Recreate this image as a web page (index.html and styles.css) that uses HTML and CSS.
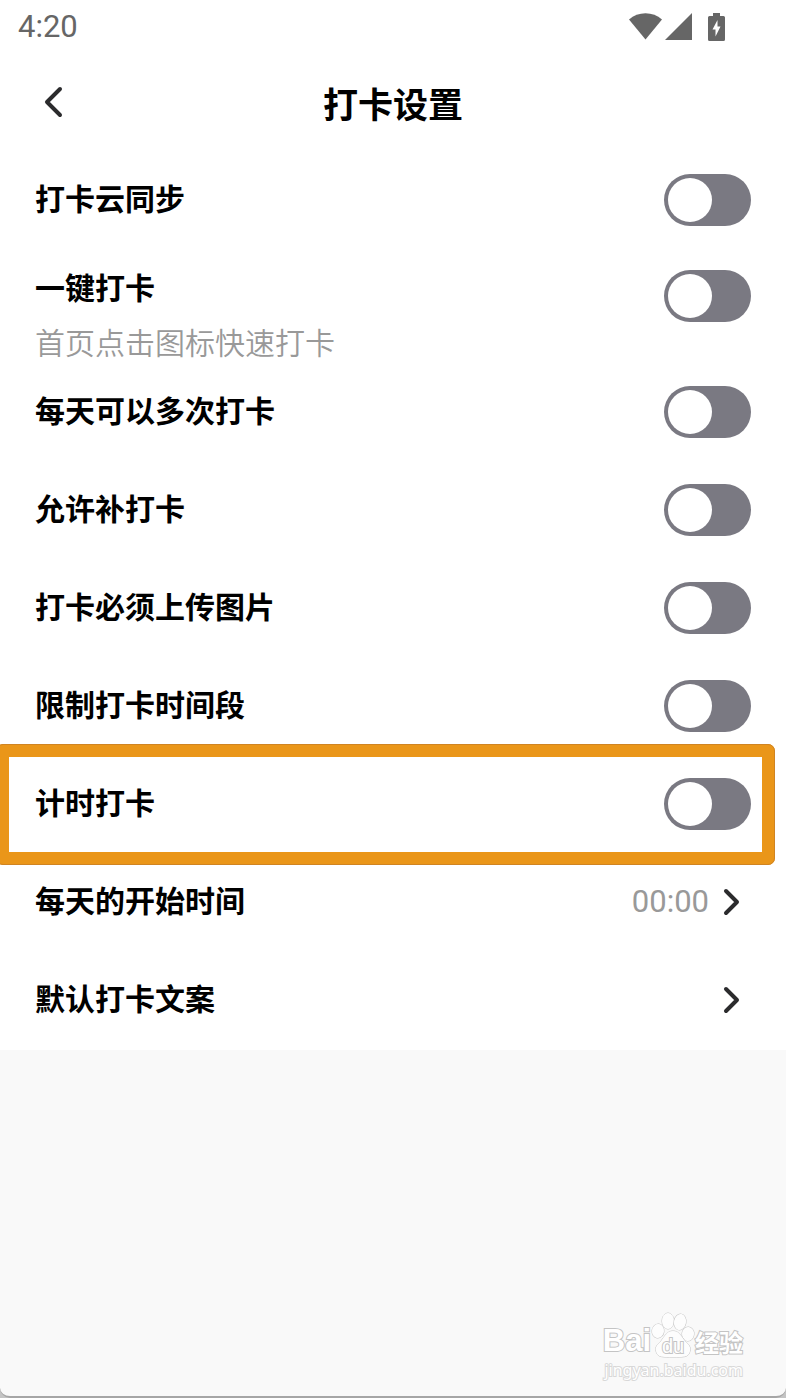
FILE: index.html
```html
<!DOCTYPE html>
<html lang="zh-CN">
<head>
    <meta charset="UTF-8">
    <meta name="viewport" content="width=device-width, initial-scale=1.0">
    <title>打卡设置</title>
    <link rel="stylesheet" href="styles.css">
</head>
<body>

    <div class="screen">
        <!-- Status bar -->
        <div class="status-bar">
            <span class="status-time">4:20</span>
            <div class="status-icons">
                <svg width="33" height="27" viewBox="0 0 33 27" aria-hidden="true">
                    <path d="M0 6.5C9-2 24-2 33 6.5L16.500 26.500Z" fill="#666"/>
                </svg>
                <svg width="27" height="27" viewBox="0 0 27 27" aria-hidden="true">
                    <path d="M27 0V27H0Z" fill="#666"/>
                </svg>
                <svg class="battery" width="17" height="28" viewBox="0 0 17 28" aria-hidden="true">
                    <path d="M5 0h7v3h3.500q1.500 0 1.500 1.500v22q0 1.500-1.500 1.500h-14q-1.500 0-1.500-1.500v-22q0-1.500 1.500-1.500h3.500z" fill="#666"/>
                    <path d="M9.500 7v6.500h3l-5 10v-7h-3z" fill="#fff"/>
                </svg>
            </div>
        </div>

        <header class="header">
            <button class="back-button" type="button" aria-label="返回">
                <svg width="20" height="32" viewBox="0 0 20 32" aria-hidden="true">
                    <path d="M17 3L4 16L17 29" class="chevron"/>
                </svg>
            </button>
            <h1>打卡设置</h1>
        </header>

        <main class="settings">
            <div class="row">
                <label for="cloudSync">打卡云同步</label>
                <input type="checkbox" class="toggle" id="cloudSync">
            </div>

            <div class="row row-note">
                <div class="row-text">
                    <label for="oneKey">一键打卡</label>
                    <p class="note">首页点击图标快速打卡</p>
                </div>
                <input type="checkbox" class="toggle" id="oneKey">
            </div>

            <div class="row">
                <label for="multiple">每天可以多次打卡</label>
                <input type="checkbox" class="toggle" id="multiple">
            </div>

            <div class="row">
                <label for="makeUp">允许补打卡</label>
                <input type="checkbox" class="toggle" id="makeUp">
            </div>

            <div class="row">
                <label for="picture">打卡必须上传图片</label>
                <input type="checkbox" class="toggle" id="picture">
            </div>

            <div class="row">
                <label for="period">限制打卡时间段</label>
                <input type="checkbox" class="toggle" id="period">
            </div>

            <div class="row highlight">
                <label for="timer">计时打卡</label>
                <input type="checkbox" class="toggle" id="timer">
            </div>

            <a class="row" href="#start-time">
                <span>每天的开始时间</span>
                <span class="row-value">00:00
                    <svg width="18" height="28" viewBox="0 0 18 28" aria-hidden="true">
                        <path d="M3 3L14 14L3 25" class="chevron"/>
                    </svg>
                </span>
            </a>

            <a class="row" href="#default-text">
                <span>默认打卡文案</span>
                <span class="row-value">
                    <svg width="18" height="28" viewBox="0 0 18 28" aria-hidden="true">
                        <path d="M3 3L14 14L3 25" class="chevron"/>
                    </svg>
                </span>
            </a>
        </main>

        <!-- Watermark -->
        <div class="watermark">
            <div class="watermark-logo">
                <span class="watermark-bai">Bai</span>
                <svg width="44" height="46" viewBox="0 0 44 46" aria-hidden="true">
                    <g class="paw">
                        <ellipse cx="7" cy="19" rx="6" ry="7" transform="rotate(8 7 19)"/>
                        <ellipse cx="17" cy="9" rx="6" ry="8"/>
                        <ellipse cx="29" cy="10" rx="6" ry="8" transform="rotate(10 29 10)"/>
                        <ellipse cx="37" cy="22" rx="6" ry="7" transform="rotate(4 37 22)"/>
                        <path d="M22 19C28 19 30 24 34 29C38 33 40 35 39 39C38 46 31 45 22 45C13 45 6 46 5 39C4 35 6 33 10 29C14 24 16 19 22 19Z"/>
                    </g>
                    <text x="22" y="41" class="paw-text">du</text>
                </svg>
                <span class="watermark-name">经验</span>
            </div>
            <div class="watermark-url">jingyan.baidu.com</div>
        </div>
    </div>

</body>
</html>
```
FILE: styles.css
```css
* {
    box-sizing: border-box;
}

body {
    margin: 0;
    background-color: #c4c4c4;
    font-family: Roboto, "Noto Sans CJK SC", sans-serif;
    color: #000;
}

.screen {
    position: relative;
    min-height: 100vh;
    background-color: #f9f9f9;
    border-bottom: 2px solid #a6a6a6;
    border-radius: 0 0 10px 10px;
}

.status-bar {
    display: flex;
    align-items: center;
    justify-content: space-between;
    height: 53px;
    padding: 0 61px 0 18px;
    background-color: #fff;
    color: #666;
}

.status-time {
    font-size: 31px;
    font-weight: 450;
}

.status-icons {
    display: flex;
    align-items: center;
    gap: 3px;
}

.battery {
    margin-left: 13px;
}

.header {
    display: grid;
    grid-template-columns: 1fr auto 1fr;
    align-items: center;
    height: 98px;
    padding: 0 37px;
    background-color: #fff;
}

.header h1 {
    margin: 0;
    font-size: 35px;
    font-weight: 700;
}

.back-button {
    display: flex;
    justify-self: start;
    padding: 6px;
    border: none;
    background: none;
    cursor: pointer;
}

.chevron {
    fill: none;
    stroke: #2b2b2d;
    stroke-width: 4;
    stroke-linecap: round;
    stroke-linejoin: round;
}

.settings {
    padding-bottom: 1px;
    background-color: #fff;
}

.row {
    position: relative;
    display: flex;
    align-items: center;
    justify-content: space-between;
    height: 98px;
    padding: 0 35px;
    color: #000;
    font-size: 30px;
    line-height: 38px;
    font-weight: 700;
    text-decoration: none;
}

.row-note {
    align-items: flex-start;
    height: auto;
    padding-top: 21px;
}

.row-text {
    display: flex;
    flex-direction: column;
    gap: 17px;
}

.note {
    margin: 0;
    color: #999;
    font-weight: 350;
}

.row-value {
    display: flex;
    align-items: center;
    gap: 14px;
    padding-right: 10px;
    color: #999;
    font-size: 31px;
    font-weight: 400;
}

.toggle {
    appearance: none;
    flex: none;
    width: 87px;
    height: 52px;
    margin: 0;
    padding: 4px;
    border-radius: 26px;
    background-color: #7a7982;
    cursor: pointer;
}

.toggle::before {
    content: "";
    display: block;
    width: 44px;
    height: 44px;
    border-radius: 50%;
    background-color: #fff;
}

.toggle:checked {
    background-color: #34c759;
}

.toggle:checked::before {
    margin-left: auto;
}

/* Orange frame drawn over the row */
.highlight::after {
    content: "";
    position: absolute;
    top: -11px;
    right: 11px;
    bottom: -12px;
    left: -4px;
    border: 13px solid #ea9619;
    border-radius: 7px;
    outline: 1px solid #d08422;
    outline-offset: -1px;
    pointer-events: none;
}

.watermark {
    position: absolute;
    right: 43px;
    bottom: 14px;
    color: #fff;
    -webkit-text-stroke: 2px #c4c4c4;
    paint-order: stroke fill;
}

.watermark-logo {
    display: flex;
    align-items: flex-end;
    justify-content: flex-end;
}

.watermark-bai {
    font-family: "Liberation Sans", Arial, sans-serif;
    font-size: 31px;
    line-height: 34px;
    font-weight: 700;
}

.watermark-name {
    font-size: 24px;
    line-height: 28px;
    font-weight: 700;
}

.watermark-url {
    font-family: "Noto Sans", sans-serif;
    font-size: 16px;
    line-height: 24px;
    text-align: right;
    -webkit-text-stroke: 2px #d8d8d8;
}

.paw {
    fill: #fdfdfd;
    stroke: #c4c4c4;
    stroke-width: 1;
}

.paw-text {
    fill: #fff;
    stroke: #c4c4c4;
    stroke-width: 2;
    font-family: "Liberation Sans", Arial, sans-serif;
    font-size: 20px;
    text-anchor: middle;
}
```
